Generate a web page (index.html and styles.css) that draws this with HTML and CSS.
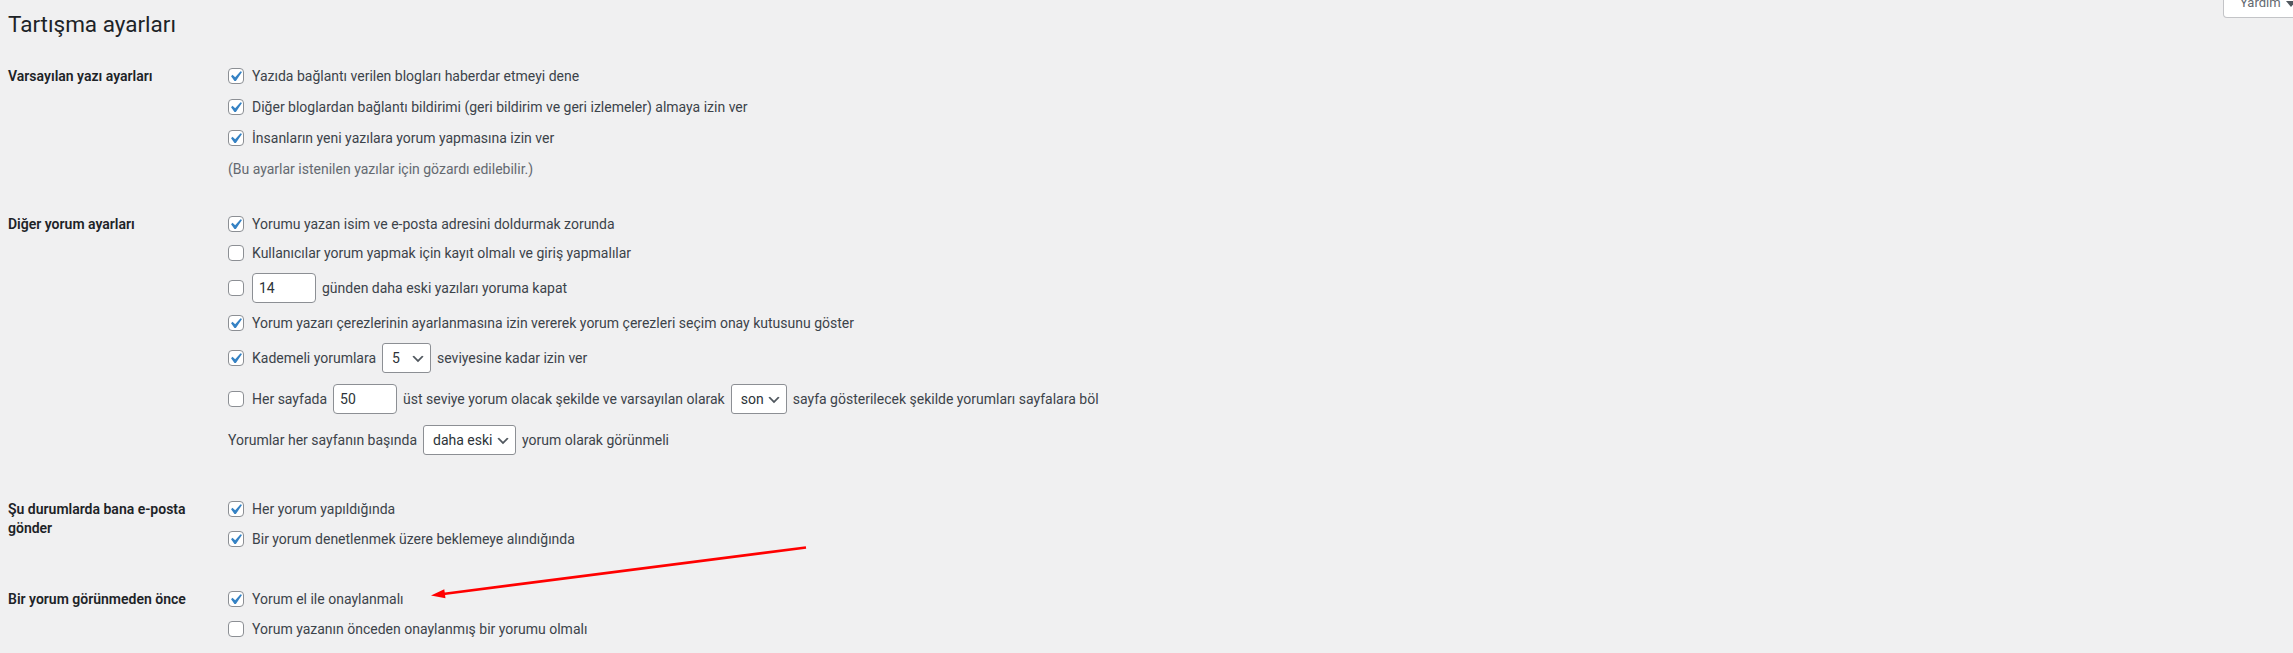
FILE: index.html
```html
<!DOCTYPE html>
<html lang="tr">
<head>
  <meta charset="UTF-8">
  <meta name="viewport" content="width=device-width, initial-scale=1.0">
  <title>Tartışma ayarları</title>
  <link rel="stylesheet" href="styles.css">
</head>
<body>

  <svg class="defs" width="0" height="0" aria-hidden="true">
    <symbol id="chk" viewBox="0 0 20 20"><path d="M14.83 4.89l1.34.94-5.81 8.38H9.02L5.78 9.67l1.34-1.25 2.57 2.4z"/></symbol>
    <symbol id="chev" viewBox="0 0 20 20"><path d="M5 6l5 5 5-5 2 1-7 7-7-7 2-1z"/></symbol>
  </svg>

  <div class="wrap">
    <div class="top">
      <h1>Tartışma ayarları</h1>
      <button class="help">Yardım <svg class="tri" width="10" height="6" viewBox="0 0 10 6"><polygon points="0,0 10,0 5,6"/></svg></button>
    </div>

    <!-- varsayılan yazı ayarları -->
    <div class="section s1">
      <div class="th">Varsayılan yazı ayarları</div>
      <div class="td">
        <label class="opt"><span class="cb"><svg><use href="#chk"/></svg></span><span>Yazıda bağlantı verilen blogları haberdar etmeyi dene</span></label>
        <label class="opt"><span class="cb"><svg><use href="#chk"/></svg></span><span>Diğer bloglardan bağlantı bildirimi (geri bildirim ve geri izlemeler) almaya izin ver</span></label>
        <label class="opt"><span class="cb"><svg><use href="#chk"/></svg></span><span>İnsanların yeni yazılara yorum yapmasına izin ver</span></label>
        <p class="description">(Bu ayarlar istenilen yazılar için gözardı edilebilir.)</p>
      </div>
    </div>

    <!-- diğer yorum ayarları -->
    <div class="section s2">
      <div class="th">Diğer yorum ayarları</div>
      <div class="td">
        <label class="opt"><span class="cb"><svg><use href="#chk"/></svg></span><span>Yorumu yazan isim ve e-posta adresini doldurmak zorunda</span></label>
        <label class="opt"><span class="cb off"></span><span>Kullanıcılar yorum yapmak için kayıt olmalı ve giriş yapmalılar</span></label>
        <label class="opt ctl"><span class="cb off"></span><input class="num" type="text" value="14"><span>günden daha eski yazıları yoruma kapat</span></label>
        <label class="opt"><span class="cb"><svg><use href="#chk"/></svg></span><span>Yorum yazarı çerezlerinin ayarlanmasına izin vererek yorum çerezleri seçim onay kutusunu göster</span></label>
        <label class="opt ctl"><span class="cb"><svg><use href="#chk"/></svg></span><span>Kademeli yorumlara</span>
          <span class="sel sel-depth"><select><option>5</option></select><svg class="chev"><use href="#chev"/></svg></span>
          <span>seviyesine kadar izin ver</span></label>
        <label class="opt ctl"><span class="cb off"></span><span>Her sayfada</span><input class="num" type="text" value="50">
          <span>üst seviye yorum olacak şekilde ve varsayılan olarak</span>
          <span class="sel sel-page"><select><option>son</option></select><svg class="chev"><use href="#chev"/></svg></span>
          <span>sayfa gösterilecek şekilde yorumları sayfalara böl</span></label>
        <label class="opt ctl"><span>Yorumlar her sayfanın başında</span>
          <span class="sel sel-order"><select><option>daha eski</option></select><svg class="chev"><use href="#chev"/></svg></span>
          <span>yorum olarak görünmeli</span></label>
      </div>
    </div>

    <!-- e-posta -->
    <div class="section s3">
      <div class="th">Şu durumlarda bana e-posta gönder</div>
      <div class="td">
        <label class="opt"><span class="cb"><svg><use href="#chk"/></svg></span><span>Her yorum yapıldığında</span></label>
        <label class="opt"><span class="cb"><svg><use href="#chk"/></svg></span><span>Bir yorum denetlenmek üzere beklemeye alındığında</span></label>
      </div>
    </div>

    <!-- görünmeden önce -->
    <div class="section s4">
      <div class="th">Bir yorum görünmeden önce</div>
      <div class="td">
        <label class="opt"><span class="cb"><svg><use href="#chk"/></svg></span><span>Yorum el ile onaylanmalı</span></label>
        <label class="opt"><span class="cb off"></span><span>Yorum yazanın önceden onaylanmış bir yorumu olmalı</span></label>
      </div>
    </div>
  </div>

  <svg class="arrow" width="2293" height="653" viewBox="0 0 2293 653">
    <line x1="806" y1="547.5" x2="443" y2="594" stroke="#ff0000" stroke-width="2.6"/>
    <polygon points="431,595.5 444.3,589.2 445.5,598.2" fill="#ff0000"/>
  </svg>

</body>
</html>
```

FILE: styles.css
```css
body {
  margin: 0;
  background: #f0f0f1;
  color: #3c434a;
  font-family: Roboto, "Liberation Sans", sans-serif;
  font-size: 14px;
  overflow: hidden;
}

.defs {
  position: absolute;
}

.wrap {
  padding-left: 8px;
}

.top {
  display: flex;
  justify-content: space-between;
  align-items: flex-start;
}

h1 {
  margin: 0;
  padding: 9px 0 10px;
  font-size: 22.5px;
  font-weight: 400;
  line-height: 30px;
  color: #1d2327;
}

.help {
  display: flex;
  align-items: flex-start;
  width: 84px;
  margin: -11px -14px 0 0;
  padding: 3px 6px 3px 16px;
  background: #fff;
  border: 1px solid #c3c4c7;
  border-top: none;
  border-radius: 0 0 4px 4px;
  color: #646970;
  font-family: inherit;
  font-size: 13px;
  line-height: 22px;
}

.help .tri {
  margin: 9px 0 0 5px;
  fill: #50575e;
}

/* satırlar */
.section {
  display: grid;
  grid-template-columns: 210px 1fr;
  padding: 18px 0 19px;
}

.s2 { padding-bottom: 27px; }
.s3 { padding-bottom: 24px; }

.th {
  padding-right: 10px;
  font-weight: 600;
  color: #1d2327;
  line-height: 19px;
}

.td {
  padding-left: 10px;
  display: flex;
  flex-direction: column;
  align-items: flex-start;
  gap: 12px;
}

.s1 .td { gap: 13px; }
.s2 .td { gap: 11px; }

.opt {
  display: flex;
  align-items: center;
  gap: 6px;
  line-height: 18px;
  min-height: 18px;
  white-space: nowrap;
}

.opt.ctl {
  min-height: 30px;
}

.cb {
  box-sizing: border-box;
  width: 16px;
  height: 16px;
  margin-right: 2px;
  flex: none;
  background: #fff;
  border: 1px solid #8c8f94;
  border-radius: 4px;
}

.cb svg {
  display: block;
  width: 21px;
  height: 21px;
  margin: -3px 0 0 -4px;
  fill: #3582c4;
}

.description {
  margin: 0;
  line-height: 18px;
  color: #646970;
}

.num {
  box-sizing: border-box;
  width: 64px;
  height: 30px;
  padding: 0 6px;
  background: #fff;
  border: 1px solid #8c8f94;
  border-radius: 4px;
  color: #2c3338;
  font-family: inherit;
  font-size: 14px;
}

.sel {
  position: relative;
  display: block;
}

.sel select {
  appearance: none;
  -webkit-appearance: none;
  box-sizing: border-box;
  height: 30px;
  padding: 0 16px 0 9px;
  background: #fff;
  border: 1px solid #8c8f94;
  border-radius: 3px;
  color: #2c3338;
  font-family: inherit;
  font-size: 14px;
}

.sel-depth select { width: 49px; }
.sel-page select { width: 56px; }
.sel-order select { width: 93px; }

.chev {
  position: absolute;
  right: 5px;
  top: 8px;
  width: 16px;
  height: 16px;
  fill: #50575e;
  pointer-events: none;
}

.arrow {
  position: absolute;
  top: 0;
  left: 0;
  pointer-events: none;
}
```
